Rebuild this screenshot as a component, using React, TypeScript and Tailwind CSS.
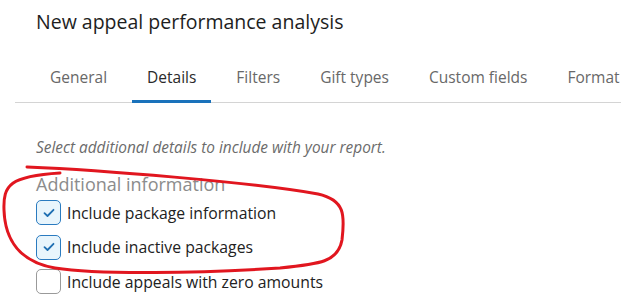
import React from "react";

const tabs = ["General", "Details", "Filters", "Gift types", "Custom fields", "Format"];

function Box({ checked }: { checked: boolean }) {
  return checked ? (
    <div className="w-[25px] h-[25px] rounded-[5px] border border-[#2a7bc0] bg-[#e8f5fc] flex items-center justify-center shrink-0">
      <svg width="12" height="10" viewBox="0 0 12 10" fill="none">
        <path d="M1.5 5.2 L4.5 8 L10.5 1.8" stroke="#1f6fb2" strokeWidth="1.8" strokeLinecap="round" strokeLinejoin="round" />
      </svg>
    </div>
  ) : (
    <div className="w-[25px] h-[25px] rounded-[5px] border border-[#9a9a9a] bg-white shrink-0" />
  );
}

export default function App() {
  const items = [
    { label: "Include package information", checked: true },
    { label: "Include inactive packages", checked: true },
    { label: "Include appeals with zero amounts", checked: false },
  ];
  return (
    <div className="relative w-[621px] h-[307px] overflow-hidden bg-white text-[#212121]" style={{ fontFamily: '"Open Sans", "Noto Sans", sans-serif' }}>
      <div className="pl-[36px] pt-[8px] h-[36px] text-[19.5px] leading-[28px] text-[#1e1e1e]">New appeal performance analysis</div>
      <div className="ml-[15px] mt-[30px] border-b border-[#d4d4d4] flex pl-[20px] gap-[10px] whitespace-nowrap">
        {tabs.map((t) => (
          <div key={t} className={`px-[15px] h-[37px] flex items-start pt-[0px] text-[15.5px] leading-[22px] border-b-[3px] -mb-[1px] ${t === "Details" ? "border-[#1a72bb] text-[#2a2a2a]" : "border-transparent text-[#686868]"}`}>
            {t}
          </div>
        ))}
      </div>
      <div className="pl-[36px] mt-[35px] text-[15.4px] italic leading-[20px] text-[#6b6b6b]">Select additional details to include with your report.</div>
      <div className="pl-[36px] mt-[15px] text-[18px] leading-[22px] text-[#8c8c8c]">Additional information</div>
      <div className="pl-[36px] mt-[5px] flex flex-col gap-[9.5px]">
        {items.map((it) => (
          <div key={it.label} className="flex items-center gap-[6px] h-[25px]">
            <Box checked={it.checked} />
            <span className="text-[15.75px] leading-[20px] text-[#222]">{it.label}</span>
          </div>
        ))}
      </div>
      <svg className="absolute left-0 top-0 pointer-events-none" width="621" height="307" viewBox="0 0 621 307" fill="none">
        <path
          d="M27 167 C100 170 250 182 318 194 C345 200 345 215 342 240 C338 262 320 264 280 268 C200 273 100 275 55 268 C20 262 5 240 4 210 C3 185 10 176 60 173"
          stroke="#e1161f"
          strokeWidth="3"
          strokeLinecap="round"
          strokeLinejoin="round"
        />
      </svg>
    </div>
  );
}
